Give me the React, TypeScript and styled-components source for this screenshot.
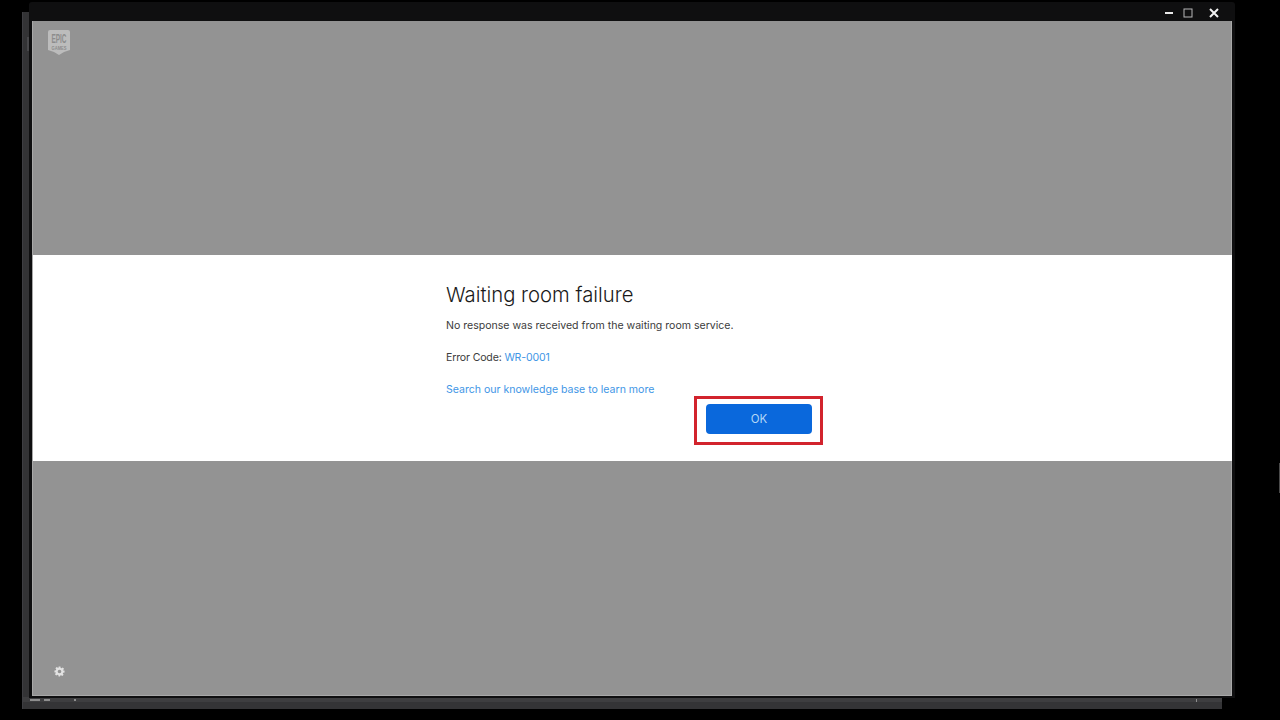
import React from 'react'
import styled, { createGlobalStyle } from 'styled-components'

const GlobalStyle = createGlobalStyle`
  html, body {
    margin: 0;
    padding: 0;
    background: #000;
  }
  * {
    box-sizing: border-box;
  }
`

const Desktop = styled.div`
  position: relative;
  width: 1280px;
  height: 720px;
  overflow: hidden;
  background: #000;
  font-family: Inter, 'Noto Sans', sans-serif;
`

const BackWindow = styled.div`
  position: absolute;
  left: 22px;
  top: 12px;
  width: 1200px;
  height: 697px;
  background: #333335;
  border-left: 1px solid #3e3e42;
  display: flex;
  flex-direction: column;
  justify-content: flex-end;
`

const BackThumb = styled.div`
  position: absolute;
  left: 4px;
  top: 25px;
  width: 2px;
  height: 14px;
  background: #48484b;
`

const BackFooter = styled.div`
  height: 12px;
  padding: 2px 25px 0 7px;
  background: linear-gradient(#3e3e40 0 5px, #343436 5px);
  display: flex;
  gap: 4px;
`

const Speck = styled.span<{ $width: number; $after?: number }>`
  width: ${({ $width }) => $width}px;
  height: 2px;
  margin-right: ${({ $after }) => $after ?? 0}px;
  background: #8e8e8e;
`

const FooterTick = styled.span`
  width: 1px;
  height: 3px;
  margin-left: auto;
  background: #8e8e8e;
`

const EdgeMark = styled.div`
  position: absolute;
  right: 0;
  top: 463px;
  width: 1px;
  height: 30px;
  background: #4a4a4a;
`

const Window = styled.div`
  position: absolute;
  left: 29px;
  top: 2px;
  width: 1206px;
  height: 696px;
  background: #0f0f10;
  border-radius: 3px 3px 0 0;
  display: flex;
  flex-direction: column;
  padding: 0 3px 2px 3px;
`

const TitleBar = styled.div`
  height: 19px;
  flex: none;
  display: flex;
  align-items: center;
  justify-content: flex-end;
  gap: 7px;
  padding: 2px 12px 0 0;
  color: #e8e8e8;
`

const WindowButton = styled.svg<{ $wide?: boolean }>`
  width: 12px;
  height: 12px;
  display: block;
  margin-left: ${({ $wide }) => ($wide ? '7px' : '0')};
`

const Content = styled.div`
  flex: 1;
  display: flex;
  flex-direction: column;
  background: #a8a8a8;
  border-bottom: 1px solid #a8a8a8;
`

const Backdrop = styled.div`
  flex: 1 0 0;
  position: relative;
  background: #939393;
  border-left: 1px solid #a8a8a8;
  border-right: 1px solid #a8a8a8;
`

const Logo = styled.svg`
  position: absolute;
  left: 15px;
  top: 9px;
  width: 22px;
  height: 25px;
  overflow: visible;
`

const Gear = styled.svg`
  position: absolute;
  left: 21px;
  bottom: 18px;
  width: 11px;
  height: 11px;
`

const Dialog = styled.div`
  flex: none;
  height: 206px;
  margin-left: 1px;
  background: #fff;
  display: flex;
  flex-direction: column;
  padding: 28px 0 0 413px;
`

const Title = styled.h1`
  margin: 0 0 11px;
  font-size: 20.3px;
  line-height: 24px;
  font-weight: 300;
  color: #1a1a1a;
`

const MessageList = styled.div`
  display: flex;
  flex-direction: column;
  gap: 17px;
`

const Message = styled.p<{ $tight?: boolean }>`
  margin: 0;
  font-size: 10.55px;
  line-height: 15px;
  font-weight: 400;
  letter-spacing: ${({ $tight }) => ($tight ? '-0.15px' : '0')};
  color: #3c3c3c;
`

const Anchor = styled.span`
  color: #3f96e6;
`

const ButtonRow = styled.div`
  width: 377px;
  margin-top: -1px;
  display: flex;
  justify-content: flex-end;
`

const Highlight = styled.div`
  width: 129px;
  height: 49px;
  border: 3px solid #d2232d;
  padding: 5px 0 0 9px;
`

const OkButton = styled.button`
  display: block;
  width: 106px;
  height: 30px;
  border: none;
  border-radius: 4px;
  background: #0a68dc;
  color: #b4d6f6;
  font-family: inherit;
  font-size: 11.5px;
  font-weight: 400;
  padding: 0;
`

export default function App() {
  return (
    <Desktop>
      <GlobalStyle />
      <BackWindow>
        <BackThumb />
        <BackFooter>
          <Speck $width={10} />
          <Speck $width={6} $after={20} />
          <Speck $width={2} />
          <FooterTick />
        </BackFooter>
      </BackWindow>
      <EdgeMark />
      <Window>
        <TitleBar>
          <WindowButton viewBox="0 0 12 12">
            <rect x="2" y="5" width="8" height="2" fill="currentColor" />
          </WindowButton>
          <WindowButton viewBox="0 0 12 12">
            <rect x="2" y="2" width="8" height="8" fill="none" stroke="#b8b8b8" strokeWidth="1" />
          </WindowButton>
          <WindowButton viewBox="0 0 12 12" $wide>
            <path d="M2 2l8 8M10 2l-8 8" stroke="#f2f2f2" strokeWidth="2" fill="none" />
          </WindowButton>
        </TitleBar>
        <Content>
          <Backdrop>
            <Logo viewBox="0 0 22 25">
              <path d="M2 0h18a2 2 0 0 1 2 2v18l-6 2-5 3-5-3-6-2V2a2 2 0 0 1 2-2z" fill="#bcbcbc" />
              <text x="11" y="13" textAnchor="middle" fontSize="12" fontWeight="700" fill="#8c8c8c" fontFamily="Liberation Sans Narrow, Liberation Sans, sans-serif" textLength="15" lengthAdjust="spacingAndGlyphs">EPIC</text>
              <text x="11" y="20" textAnchor="middle" fontSize="4.500" fontWeight="700" fill="#8c8c8c" fontFamily="Liberation Sans, sans-serif" textLength="15" lengthAdjust="spacingAndGlyphs">GAMES</text>
            </Logo>
          </Backdrop>
          <Dialog>
            <Title>Waiting room failure</Title>
            <MessageList>
              <Message>No response was received from the waiting room service.</Message>
              <Message $tight>
                Error Code: <Anchor>WR-0001</Anchor>
              </Message>
              <Message>
                <Anchor>Search our knowledge base to learn more</Anchor>
              </Message>
            </MessageList>
            <ButtonRow>
              <Highlight>
                <OkButton>OK</OkButton>
              </Highlight>
            </ButtonRow>
          </Dialog>
          <Backdrop>
            <Gear viewBox="0 0 24 24">
              <path
                fill="#e2e2e2"
                fillRule="evenodd"
                d="M10 1h4l.6 3.100 1.900.8 2.600-1.800 2.800 2.800-1.800 2.600.8 1.900L23 10v4l-3.100.6-.8 1.900 1.800 2.600-2.800 2.800-2.600-1.800-1.900.8L13 23h-3l-.6-3.100-1.900-.8-2.600 1.800-2.800-2.800 1.800-2.600-.8-1.900L1 14v-4l3.100-.6.8-1.900-1.800-2.600 2.800-2.800 2.600 1.800 1.900-.8zM12 8a4 4 0 1 0 0 8 4 4 0 0 0 0-8z"
              />
            </Gear>
          </Backdrop>
        </Content>
      </Window>
    </Desktop>
  )
}
